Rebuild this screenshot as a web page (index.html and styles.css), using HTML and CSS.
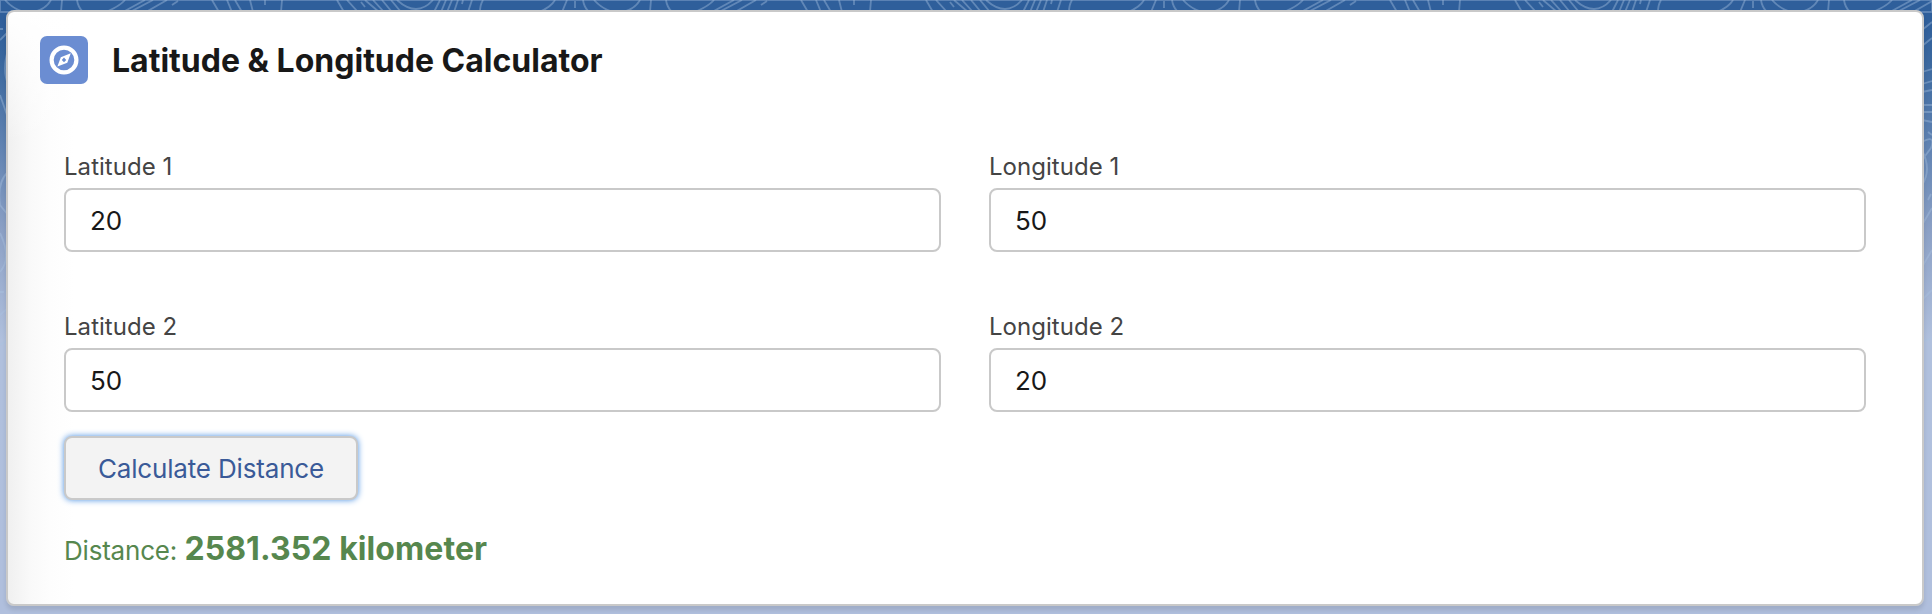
FILE: index.html
```html
<!DOCTYPE html>
<html lang="en">
<head>
<meta charset="utf-8">
<title>Latitude &amp; Longitude Calculator</title>
<link rel="stylesheet" href="styles.css">
</head>
<body>
<svg class="contours" width="1932" height="614" viewBox="0 0 1932 614" aria-hidden="true">
  <defs>
    <pattern id="topo" width="589" height="12" patternUnits="userSpaceOnUse">
      <path d="M5 0Q13 9 24 12M34 12Q46 9 51 0M62 0L61 12M77 0Q78 7 83 12M125 0Q120 6 106 12M145 0L123 12M153 0L130 12M167 0L146 12M172 5L178 1M212 0L219 12M227 0L232 12M235 0L242 12M250 0L253 12M265 0V5M282 0L281 12M337 0L344 12M347 0L358 12M361 2L365 7M365 0L379 12M373 0L384 12M382 0L392 12M391 0L401 12M397 0Q417 18 433 0M434 12L440 0M441 12L446 0M447 12L452 0M454 12L458 0M462 4L463 0M468 12L472 0M480 12Q480 5 483 0M555 0Q551 7 539 12M567 0L562 12M575 1V8M583 0Q584 7 589 12"/>
    </pattern>
  </defs>
  <rect width="1932" height="12" fill="url(#topo)"/>
  <path d="M0 40Q6 34 8 32M0 29H3M0 95Q4 106 8 118M8 50Q2 70 8 84M8 172Q-3 182 0 205L8 215M0 233Q12 258 0 272M0 292H4M0 315L8 308M0 345L8 340M1922 30L1932 22M1922 46L1932 38M1922 72L1932 69M1922 84L1932 81M1922 92L1932 90M1922 105H1932M1922 112H1932M1922 120L1932 122M1928 132L1932 135M1922 142Q1936 134 1931 148L1922 160M1922 150Q1932 170 1922 185M1928 200L1931 194M1922 225L1932 208M1922 267L1932 250M1922 300L1932 290M1922 342L1932 338"/>
</svg>
<main class="card">
  <header class="card-header">
    <span class="card-icon">
      <svg width="48" height="48" viewBox="0 0 48 48" aria-hidden="true">
        <circle cx="24" cy="24" r="12.4" fill="none" stroke="#fff" stroke-width="4.2"/>
        <path fill="#fff" fill-rule="evenodd" d="M30.8 17.2L27.3 26.8L17.4 30.6L20.8 21.2ZM24 21.5L21.8 24L24 26.3L26.2 24Z"/>
      </svg>
    </span>
    <h1 class="card-title">Latitude &amp; Longitude Calculator</h1>
  </header>
  <form class="card-body">
    <div class="fields">
      <label class="field"><span class="label">Latitude 1</span><input class="input" type="text" value="20"></label>
      <label class="field"><span class="label">Longitude 1</span><input class="input" type="text" value="50"></label>
      <label class="field"><span class="label">Latitude 2</span><input class="input" type="text" value="50"></label>
      <label class="field"><span class="label">Longitude 2</span><input class="input" type="text" value="20"></label>
    </div>
    <button class="button" type="button">Calculate Distance</button>
    <p class="result"><span class="result-label">Distance:</span> <strong class="result-value">2581.352 kilometer</strong></p>
  </form>
</main>
</body>
</html>
```
FILE: styles.css
```css
* { box-sizing: border-box; }
body {
  margin: 0;
  height: 614px;
  padding: 10px 8px 8px 6px;
  overflow: hidden;
  font-family: Inter, "Liberation Sans", sans-serif;
  background: linear-gradient(#2f5f9b 0, #2f5f9b 22px, #3c699f 65px, #6284b3 150px, #8ba0c5 230px, #b0c0dd 340px, #b0bfdd 100%);
}
.contours {
  position: absolute;
  top: 0;
  left: 0;
  fill: none;
  stroke: rgba(170, 195, 225, .4);
  stroke-width: 1.8;
}
.card {
  position: relative;
  height: 596px;
  border: 2px solid #c9c9c9;
  border-radius: 8px;
  background: linear-gradient(#fff 0, rgba(255, 255, 255, 0) 130px), linear-gradient(90deg, #f0f0f0 0, #f9f9f9 22px, #fdfdfd 42px, #fff 66px);
  box-shadow: 0 4px 4px rgba(0, 0, 0, .1);
}
.card-header {
  display: flex;
  align-items: center;
  gap: 24px;
  padding: 24px 32px 0;
}
.card-icon {
  width: 48px;
  height: 48px;
  border-radius: 7px;
  background: #6b8dd2;
}
.card-icon svg { display: block; }
.card-title {
  margin: 0;
  padding-top: 2px;
  font-size: 32px;
  line-height: 40px;
  font-weight: 700;
  letter-spacing: 0;
  color: #181818;
}
.card-body { padding: 62px 56px 0; }
.fields {
  display: grid;
  grid-template-columns: 1fr 1fr;
  gap: 54px 48px;
}
.field { display: flex; flex-direction: column; }
.label {
  height: 42px;
  padding-top: 3px;
  font-size: 24px;
  line-height: 36px;
  letter-spacing: .04px;
  color: #444;
}
.input {
  height: 64px;
  width: 100%;
  padding: 0 24px;
  border: 2px solid #c9c9c9;
  border-radius: 8px;
  background: #fff;
  font: 26px/60px Inter, "Liberation Sans", sans-serif;
  color: #181818;
}
.button {
  display: block;
  width: 294px;
  height: 64px;
  margin-top: 24px;
  padding: 2px 0 0;
  border: 2px solid #c9c9c9;
  border-radius: 8px;
  background: #f3f3f3;
  box-shadow: 0 0 6px #4a90e2;
  font: 26px/58px Inter, "Liberation Sans", sans-serif;
  letter-spacing: -.17px;
  color: #3a5a98;
}
.result {
  margin: 25px 0 0;
  line-height: 48px;
  color: #56874e;
  white-space: nowrap;
  font-size: 26px;
}
.result-label { letter-spacing: -.2px; }
.result-value { font-size: 32px; font-weight: 700; letter-spacing: .08px; }
```
